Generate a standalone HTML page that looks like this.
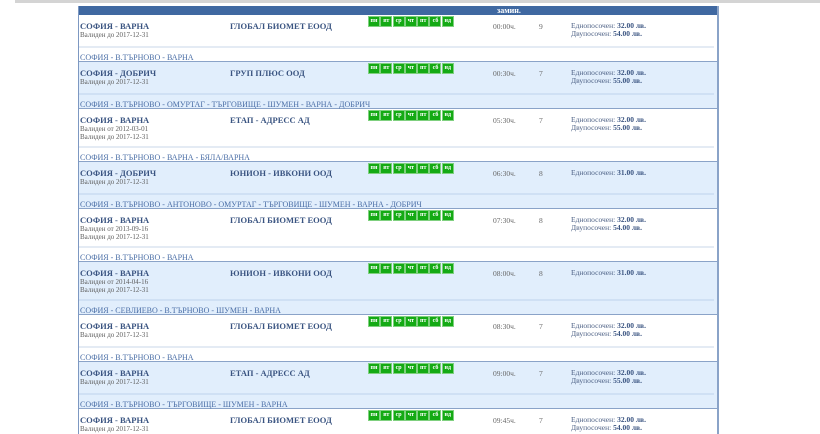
<!DOCTYPE html>
<html><head><meta charset="utf-8"><style>
html,body{margin:0;width:820px;height:434px;overflow:hidden;background:#fff;font-family:"Liberation Serif",serif;position:relative}
.top{position:absolute;left:15px;top:0;width:805px;height:3px;background:#d4d4d4}
.tbl{position:absolute;left:78px;top:6px;width:638px;height:428px;overflow:hidden;border-left:1px solid #7d98c2;border-right:2px solid #8aa3c8}
.hd{position:absolute;left:0;top:0;width:638px;height:9px;background:#3f68a1;color:#fff;font-weight:bold;font-size:8px;line-height:9px}
.row{position:absolute;left:0;width:638px;border-bottom:1px solid #8aa3c8}
.b{background:#e1eefc}
.t{position:absolute;left:1px;top:6px;font-weight:bold;font-size:8.5px;color:#3a5481;white-space:nowrap}
.c{position:absolute;left:151px;top:6px;font-weight:bold;font-size:8.5px;color:#3a5481;white-space:nowrap}
.v{position:absolute;left:1px;top:17px;font-size:7px;line-height:7.5px;color:#5e5e5e;white-space:nowrap}
.d{position:absolute;left:290px;top:2px}
.d span{display:inline-block;width:10px;height:9px;background:#14aa14;color:#fff;font-size:6px;line-height:9px;text-align:center;margin-right:2.3px;font-weight:bold;outline:1px solid #7fd07f;vertical-align:top}
.tm{position:absolute;left:414px;top:7px;font-size:7.5px;color:#666}
.n{position:absolute;left:460px;top:7px;font-size:7.5px;color:#666}
.p{position:absolute;left:492px;top:7px;font-size:7.5px;line-height:8px;color:#4d6185;white-space:nowrap}
.p b{color:#3a5481}
.ln{position:absolute;left:0;width:635px;height:2px;background:#e4ebf4}
.b .ln{background:#cfe0f4}
.r{position:absolute;left:1px;font-size:8px;color:#4a6ea6;white-space:nowrap}
</style></head><body>
<div class="top"></div>
<div class="tbl">
<div class="hd"><span style="position:absolute;left:418px">замин.</span></div>

<div class="row" style="top:9px;height:46px"><div class="t">СОФИЯ - ВАРНА</div><div class="c">ГЛОБАЛ БИОМЕТ ЕООД</div><div class="v">Валиден до 2017-12-31</div><div class="d"><span>пн</span><span>вт</span><span>ср</span><span>чт</span><span>пт</span><span>сб</span><span>нд</span></div><div class="tm">00:00ч.</div><div class="n">9</div><div class="p">Еднопосочен: <b>32.00 лв.</b><br>Двупосочен: <b>54.00 лв.</b></div><div class="ln" style="top:31px"></div><div class="r" style="top:38px">СОФИЯ - В.ТЪРНОВО - ВАРНА</div></div>

<div class="row b" style="top:56px;height:46px"><div class="t">СОФИЯ - ДОБРИЧ</div><div class="c">ГРУП ПЛЮС ООД</div><div class="v">Валиден до 2017-12-31</div><div class="d"><span>пн</span><span>вт</span><span>ср</span><span>чт</span><span>пт</span><span>сб</span><span>нд</span></div><div class="tm">00:30ч.</div><div class="n">7</div><div class="p">Еднопосочен: <b>32.00 лв.</b><br>Двупосочен: <b>55.00 лв.</b></div><div class="ln" style="top:31px"></div><div class="r" style="top:38px">СОФИЯ - В.ТЪРНОВО - ОМУРТАГ - ТЪРГОВИЩЕ - ШУМЕН - ВАРНА - ДОБРИЧ</div></div>

<div class="row" style="top:103px;height:52px"><div class="t">СОФИЯ - ВАРНА</div><div class="c">ЕТАП - АДРЕСС АД</div><div class="v">Валиден от 2012-03-01<br>Валиден до 2017-12-31</div><div class="d"><span>пн</span><span>вт</span><span>ср</span><span>чт</span><span>пт</span><span>сб</span><span>нд</span></div><div class="tm">05:30ч.</div><div class="n">7</div><div class="p">Еднопосочен: <b>32.00 лв.</b><br>Двупосочен: <b>55.00 лв.</b></div><div class="ln" style="top:37px"></div><div class="r" style="top:44px">СОФИЯ - В.ТЪРНОВО - ВАРНА - БЯЛА/ВАРНА</div></div>

<div class="row b" style="top:156px;height:46px"><div class="t">СОФИЯ - ДОБРИЧ</div><div class="c">ЮНИОН - ИВКОНИ ООД</div><div class="v">Валиден до 2017-12-31</div><div class="d"><span>пн</span><span>вт</span><span>ср</span><span>чт</span><span>пт</span><span>сб</span><span>нд</span></div><div class="tm">06:30ч.</div><div class="n">8</div><div class="p">Еднопосочен: <b>31.00 лв.</b></div><div class="ln" style="top:31px"></div><div class="r" style="top:38px">СОФИЯ - В.ТЪРНОВО - АНТОНОВО - ОМУРТАГ - ТЪРГОВИЩЕ - ШУМЕН - ВАРНА - ДОБРИЧ</div></div>

<div class="row" style="top:203px;height:52px"><div class="t">СОФИЯ - ВАРНА</div><div class="c">ГЛОБАЛ БИОМЕТ ЕООД</div><div class="v">Валиден от 2013-09-16<br>Валиден до 2017-12-31</div><div class="d"><span>пн</span><span>вт</span><span>ср</span><span>чт</span><span>пт</span><span>сб</span><span>нд</span></div><div class="tm">07:30ч.</div><div class="n">8</div><div class="p">Еднопосочен: <b>32.00 лв.</b><br>Двупосочен: <b>54.00 лв.</b></div><div class="ln" style="top:37px"></div><div class="r" style="top:44px">СОФИЯ - В.ТЪРНОВО - ВАРНА</div></div>

<div class="row b" style="top:256px;height:52px"><div class="t">СОФИЯ - ВАРНА</div><div class="c">ЮНИОН - ИВКОНИ ООД</div><div class="v">Валиден от 2014-04-16<br>Валиден до 2017-12-31</div><div class="d"><span>пн</span><span>вт</span><span>ср</span><span>чт</span><span>пт</span><span>сб</span><span>нд</span></div><div class="tm">08:00ч.</div><div class="n">8</div><div class="p">Еднопосочен: <b>31.00 лв.</b></div><div class="ln" style="top:37px"></div><div class="r" style="top:44px">СОФИЯ - СЕВЛИЕВО - В.ТЪРНОВО - ШУМЕН - ВАРНА</div></div>

<div class="row" style="top:309px;height:46px"><div class="t">СОФИЯ - ВАРНА</div><div class="c">ГЛОБАЛ БИОМЕТ ЕООД</div><div class="v">Валиден до 2017-12-31</div><div class="d"><span>пн</span><span>вт</span><span>ср</span><span>чт</span><span>пт</span><span>сб</span><span>нд</span></div><div class="tm">08:30ч.</div><div class="n">7</div><div class="p">Еднопосочен: <b>32.00 лв.</b><br>Двупосочен: <b>54.00 лв.</b></div><div class="ln" style="top:31px"></div><div class="r" style="top:38px">СОФИЯ - В.ТЪРНОВО - ВАРНА</div></div>

<div class="row b" style="top:356px;height:46px"><div class="t">СОФИЯ - ВАРНА</div><div class="c">ЕТАП - АДРЕСС АД</div><div class="v">Валиден до 2017-12-31</div><div class="d"><span>пн</span><span>вт</span><span>ср</span><span>чт</span><span>пт</span><span>сб</span><span>нд</span></div><div class="tm">09:00ч.</div><div class="n">7</div><div class="p">Еднопосочен: <b>32.00 лв.</b><br>Двупосочен: <b>55.00 лв.</b></div><div class="ln" style="top:31px"></div><div class="r" style="top:38px">СОФИЯ - В.ТЪРНОВО - ТЪРГОВИЩЕ - ШУМЕН - ВАРНА</div></div>

<div class="row" style="top:403px;height:46px;border-bottom:none"><div class="t">СОФИЯ - ВАРНА</div><div class="c">ГЛОБАЛ БИОМЕТ ЕООД</div><div class="v">Валиден до 2017-12-31</div><div class="d"><span>пн</span><span>вт</span><span>ср</span><span>чт</span><span>пт</span><span>сб</span><span>нд</span></div><div class="tm">09:45ч.</div><div class="n">7</div><div class="p">Еднопосочен: <b>32.00 лв.</b><br>Двупосочен: <b>54.00 лв.</b></div></div>
</div>
</body></html>
